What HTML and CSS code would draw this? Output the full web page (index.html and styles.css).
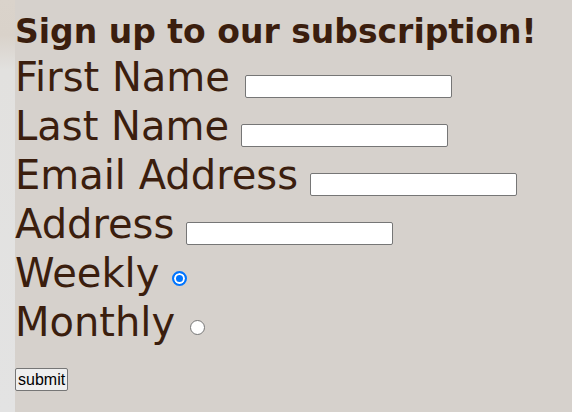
FILE: index.html
```html
<!DOCTYPE html>
<html lang="en">
<head>
<meta charset="utf-8">
<title>Sign up</title>
<link rel="stylesheet" href="styles.css">
</head>
<body>
<main class="page">
  <form class="signup">
    <h1 class="signup-title">Sign up to our subscription!</h1>
    <div class="row"><label for="fn">First Name</label><input class="field field-wide" type="text" id="fn"></div>
    <div class="row"><label for="ln">Last Name</label><input class="field" type="text" id="ln"></div>
    <div class="row"><label for="em">Email Address</label><input class="field" type="text" id="em"></div>
    <div class="row"><label for="ad">Address</label><input class="field" type="text" id="ad"></div>
    <div class="row"><label for="wk">Weekly</label><input class="radio" type="radio" name="freq" id="wk" checked></div>
    <div class="row"><label for="mo">Monthly</label><input class="radio radio-wide" type="radio" name="freq" id="mo"></div>
    <div class="actions"><button class="submit" type="submit">submit</button></div>
  </form>
</main>
</body>
</html>
```
FILE: styles.css
```css
html, body {
  margin: 0;
  height: 100%;
}
body {
  background: linear-gradient(to bottom, #dad3cb 0, #d9d2ca 35px, #e2e1df 70px, #e3e3e3 100%);
}
.page {
  margin-left: 15px;
  min-height: 100%;
  background: #d6d1cc;
  padding-top: 10px;
  box-sizing: border-box;
  color: #3b1e0e;
  font-family: "DejaVu Sans", sans-serif;
}
.signup {
  margin: 0;
}
.signup-title {
  margin: 0;
  font-size: 33px;
  font-weight: bold;
  line-height: 43px;
}
.row {
  font-size: 40px;
  line-height: 49px;
  white-space: nowrap;
}
.field {
  box-sizing: border-box;
  width: 207px;
  height: 23px;
  margin: 0 0 0 12px;
  padding: 0 2px;
  border: 1px solid #767676;
  border-radius: 2px;
  background: #fff;
  font: 16px "Liberation Sans", Arial, sans-serif;
  vertical-align: baseline;
}
.field-wide {
  margin-left: 15px;
}
.radio {
  -webkit-appearance: none;
  appearance: none;
  box-sizing: border-box;
  width: 15px;
  height: 15px;
  margin: 0 0 1px 13px;
  border: 1px solid #767676;
  border-radius: 50%;
  background: #fff;
  vertical-align: baseline;
}
.radio-wide {
  margin-left: 15px;
}
.radio:checked {
  border: 2px solid #0075ff;
  background: #0075ff;
  box-shadow: inset 0 0 0 2px #fff;
}
.actions {
  margin-top: 21px;
}
.submit {
  box-sizing: border-box;
  height: 23px;
  margin: 0;
  padding: 0 2px;
  border: 1px solid #767676;
  border-radius: 2px;
  background: #efefef;
  color: #000;
  font: 16px "Liberation Sans", Arial, sans-serif;
}
```
